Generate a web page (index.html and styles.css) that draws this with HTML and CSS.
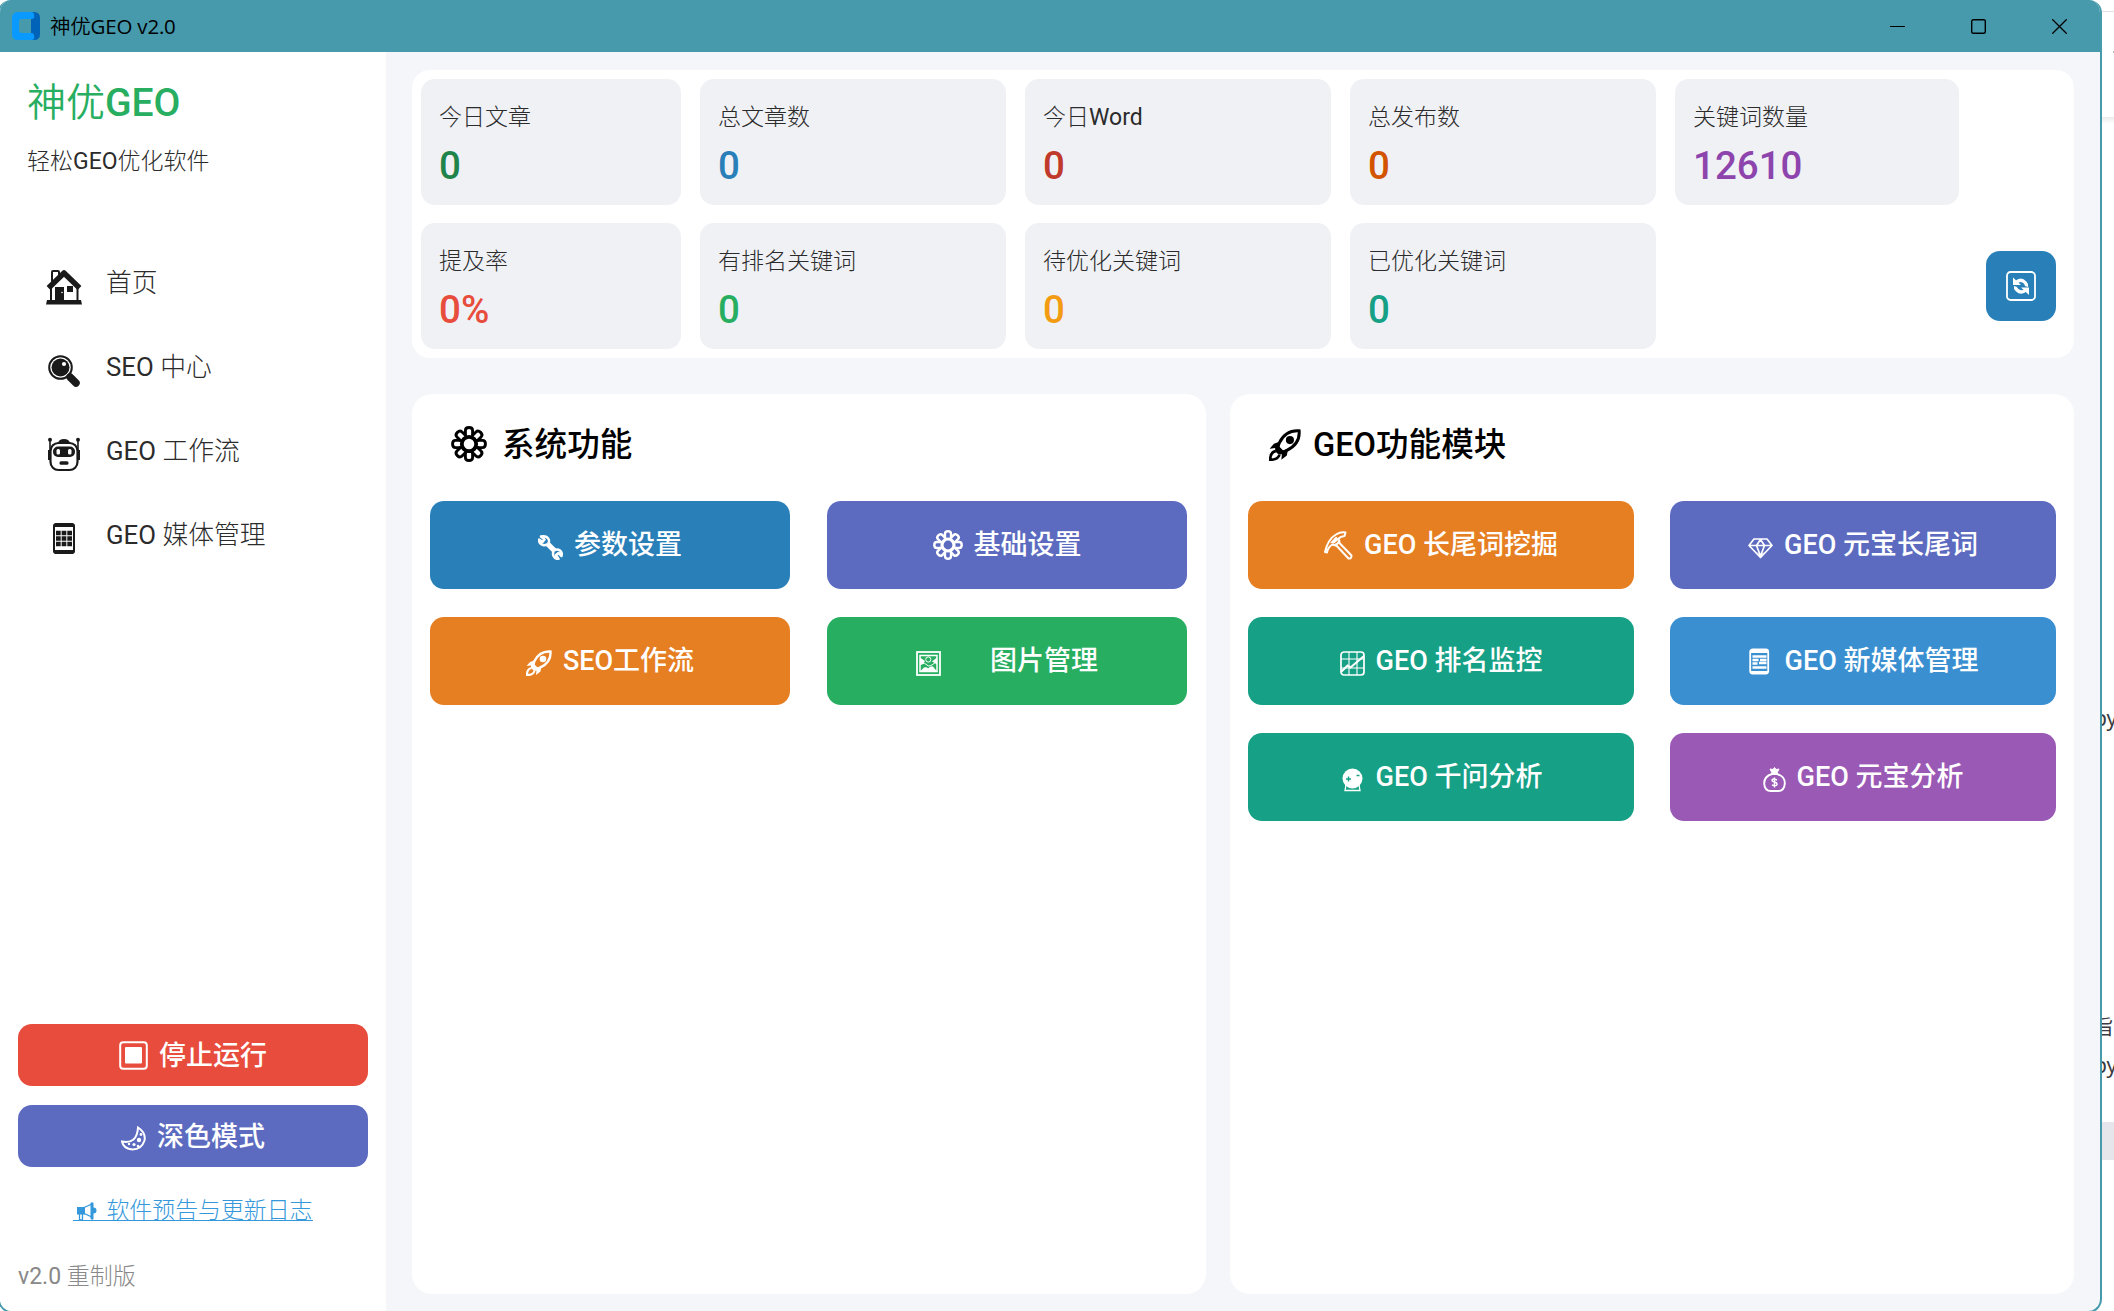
FILE: index.html
```html
<!DOCTYPE html>
<html lang="zh-CN">
<head>
    <meta charset="UTF-8">
    <meta name="viewport" content="width=device-width, initial-scale=1.0">
    <title>神优GEO v2.0</title>
    <link rel="stylesheet" href="styles.css">
</head>
<body>
    <!-- Shared icons -->
    <svg class="icon-defs" width="0" height="0">
        <symbol id="gear" viewBox="0 0 30 30">
            <g fill="none" stroke="currentColor" stroke-width="2.4">
                <g id="lobe-pair">
                    <path d="M12 8.600V3.800Q12 1.300 15 1.300T18 3.800V8.600"/>
                    <path d="M12 21.400V26.200Q12 28.700 15 28.700T18 26.200V21.400"/>
                </g>
                <use href="#lobe-pair" transform="rotate(45 15 15)"/>
                <use href="#lobe-pair" transform="rotate(90 15 15)"/>
                <use href="#lobe-pair" transform="rotate(135 15 15)"/>
                <circle cx="15" cy="15" r="6" stroke-width="3.200"/>
            </g>
        </symbol>
        <symbol id="rocket" viewBox="0 0 26 26">
            <path d="M24.500 1.500C18 1 12 4 8.500 11L7 15l4 4 3.500-1.600C21.500 14 25 8 24.500 1.500z" fill="none" stroke="currentColor" stroke-width="2.400"/>
            <circle cx="17" cy="9" r="3.300" fill="currentColor"/>
            <path d="M9.500 10L4 12l-3.500 4 4.500-.5L5 18l3 3 2.500-.5L10 25l4.500-3.500 1-5.500-4 1.500-3-3z" fill="currentColor"/>
            <path d="M5.500 18C2 18.500 1 21 1 25c4.500 0 6.500-1 7.500-4" fill="none" stroke="currentColor" stroke-width="2.200"/>
        </symbol>
    </svg>

    <!-- Strip of the page behind the window -->
    <div class="behind">
        <span class="behind-line"></span>
        <span class="behind-tick"></span>
        <span class="behind-shadow"></span>
        <span class="behind-text behind-a">py</span>
        <span class="behind-text behind-b">旨</span>
        <span class="behind-text behind-c">py</span>
        <span class="behind-bar"></span>
    </div>

    <div class="window">
        <div class="titlebar">
            <svg class="app-logo" width="28" height="28" viewBox="0 0 28 28">
                <path d="M18 0h4q6 0 6 6v16q0 6-6 6h-4l1-6V6z" fill="#0063b8"/>
                <path d="M6 0h14q3 1 2 6-1 1-3 1H10q-3 0-3 3v8q0 3 3 3h10q3 1 2 6l-2 1H6q-6 0-6-6V6q0-6 6-6z" fill="#0a9aff"/>
            </svg>
            <span class="title">神优GEO v2.0</span>
            <div class="controls">
                <svg width="15" height="15" viewBox="0 0 15 15"><path d="M0 7.500h15" stroke="#000"/></svg>
                <svg width="15" height="15" viewBox="0 0 15 15"><rect x=".7" y=".7" width="13.600" height="13.600" rx="1.500" fill="none" stroke="#000" stroke-width="1.400"/></svg>
                <svg width="15" height="15" viewBox="0 0 15 15"><path d="M.3.3l14.400 14.400M14.700.3L.3 14.700" stroke="#000" stroke-width="1.300"/></svg>
            </div>
        </div>

        <div class="body">
            <div class="sidebar">
                <div class="brand">神优GEO</div>
                <div class="slogan">轻松GEO优化软件</div>

                <div class="nav">
                    <div class="nav-item">
                        <svg width="36" height="36" viewBox="0 0 36 36">
                            <path d="M6 14V3q0-1 1-1h5q1 0 1 1v4" fill="none" stroke="#1a1a1a" stroke-width="2"/>
                            <path d="M2.500 19L18 4l15.500 15" fill="none" stroke="#1a1a1a" stroke-width="5.500" stroke-linejoin="round"/>
                            <path d="M5 18v13M31.500 18v13" stroke="#1a1a1a" stroke-width="2"/>
                            <path d="M9 18h9v13H9zM21 17h6v6h-6zM1 31h34l1 4.500H0z" fill="#1a1a1a"/>
                            <circle cx="16" cy="23.500" r=".8" fill="#fff"/>
                        </svg>
                        <span>首页</span>
                    </div>
                    <div class="nav-item">
                        <svg width="36" height="36" viewBox="0 0 36 36">
                            <circle cx="14.500" cy="14.500" r="11.300" fill="none" stroke="#1a1a1a" stroke-width="2"/>
                            <circle cx="14.500" cy="14.500" r="9" fill="#1a1a1a"/>
                            <circle cx="18" cy="11" r="2.100" fill="#fff"/>
                            <path d="M24 24l6 6" stroke="#1a1a1a" stroke-width="7.500" stroke-linecap="round"/>
                        </svg>
                        <span>SEO 中心</span>
                    </div>
                    <div class="nav-item">
                        <svg width="36" height="36" viewBox="0 0 36 36">
                            <rect x="4.500" y="6" width="27" height="27" rx="8" fill="none" stroke="#1a1a1a" stroke-width="2.200"/>
                            <path d="M12 6q1-4 6-4t6 4z" fill="#1a1a1a"/>
                            <path d="M4 3v10M32 3v10" stroke="#1a1a1a" stroke-width="1.600"/>
                            <circle cx="4" cy="2.800" r="2" fill="#1a1a1a"/><circle cx="32" cy="2.800" r="2" fill="#1a1a1a"/>
                            <path d="M3.500 13v10M32.500 13v10" stroke="#1a1a1a" stroke-width="3"/>
                            <rect x="7" y="9.500" width="22" height="10.500" rx="5" fill="#1a1a1a"/>
                            <rect x="10.500" y="12" width="3.500" height="5.500" rx="1.500" fill="#fff"/><rect x="22" y="12" width="3.500" height="5.500" rx="1.500" fill="#fff"/>
                            <rect x="13.500" y="24.300" width="9" height="3.400" rx="1.500" fill="#1a1a1a"/>
                        </svg>
                        <span>GEO 工作流</span>
                    </div>
                    <div class="nav-item">
                        <svg width="36" height="36" viewBox="0 0 36 36">
                            <rect x="8" y="3" width="20" height="29" rx="2.500" fill="none" stroke="#1a1a1a" stroke-width="2"/>
                            <path d="M7 6q0-4 4-4h14q4 0 4 4zM7 29h22q0 4-4 4H11q-4 0-4-4z" fill="#1a1a1a"/>
                            <path d="M10 12h16M10 17.500h16M10 23h16" stroke="#1a1a1a" stroke-width="4.400" stroke-dasharray="4.700 .95"/>
                        </svg>
                        <span>GEO 媒体管理</span>
                    </div>
                </div>

                <div class="side-btn red">
                    <svg width="29" height="29" viewBox="0 0 29 29">
                        <rect x="1.200" y="1.200" width="26.600" height="26.600" rx="3" fill="none" stroke="#fff" stroke-width="2"/>
                        <rect x="6" y="6" width="17" height="16.500" rx="1" fill="#fff"/>
                    </svg>
                    <span>停止运行</span>
                </div>
                <div class="side-btn indigo">
                    <svg class="low" width="25" height="25" viewBox="0 0 25 25">
                        <path d="M17 1.500q8 5 6.500 13-3 9-12 9Q2.500 23 1 15.500q15 3 16-14z" fill="none" stroke="#fff" stroke-width="2"/>
                        <circle cx="18" cy="14" r="2.200" fill="#fff"/><circle cx="13" cy="18.500" r="1.600" fill="#fff"/><circle cx="20" cy="8.500" r="1.400" fill="#fff"/><circle cx="8" cy="18" r="1.200" fill="#fff"/><circle cx="17" cy="20" r="1.300" fill="#fff"/>
                    </svg>
                    <span>深色模式</span>
                </div>
                <div class="log-link">
                    <svg width="20" height="18" viewBox="0 0 20 18">
                        <path d="M0 5h8v7.500H0zM13.500 1q2-1.500 3 0v4.500q3 0 3 3t-3 3V17q-1 1.500-3 0z" fill="#3498db"/>
                        <path d="M6 6l9-4v13l-9-4M2.500 12v6h3v-6" fill="none" stroke="#3498db" stroke-width="1.300"/>
                    </svg>
                    <span>软件预告与更新日志</span>
                </div>
                <div class="version">v2.0 重制版</div>
            </div>

            <div class="main">
                <div class="stats">
                    <div class="stat-grid">
                        <div class="stat"><span>今日文章</span><b class="c-green">0</b></div>
                        <div class="stat"><span>总文章数</span><b class="c-blue">0</b></div>
                        <div class="stat"><span>今日Word</span><b class="c-darkred">0</b></div>
                        <div class="stat"><span>总发布数</span><b class="c-pumpkin">0</b></div>
                        <div class="stat"><span>关键词数量</span><b class="c-purple">12610</b></div>
                        <div class="stat"><span>提及率</span><b class="c-red">0%</b></div>
                        <div class="stat"><span>有排名关键词</span><b class="c-lime">0</b></div>
                        <div class="stat"><span>待优化关键词</span><b class="c-orange">0</b></div>
                        <div class="stat"><span>已优化关键词</span><b class="c-teal">0</b></div>
                    </div>
                    <div class="refresh">
                        <svg width="30" height="30" viewBox="0 0 30 30">
                            <rect x="1" y="1" width="28" height="28" rx="3.500" fill="none" stroke="#fff" stroke-width="1.800"/>
                            <path d="M10 11.500q5-4.500 9 0 2 2 1.500 4M20 19q-5 4-9 0-2-2-1.500-3.500" fill="none" stroke="#fff" stroke-width="3.300"/>
                            <path d="M7 6.500v7.500h8zM23 24v-7.500h-8z" fill="#fff"/>
                        </svg>
                    </div>
                </div>

                <div class="panels">
                    <div class="panel panel-system">
                        <div class="panel-title">
                            <svg width="36" height="36"><use href="#gear"/></svg>
                            <span>系统功能</span>
                        </div>
                        <div class="btn-grid">
                            <div class="btn blue">
                                <svg class="low" width="25" height="25" viewBox="0 0 25 25">
                                    <path d="M3 1.500l3.500 3-2 2.500-3.500-2.500Q1 9 5 10q2 .5 3.500-.5l7 7q-1 2 0 4.500 1.500 3 5 3l-2.500-4 2.500-2 3 3q1-3.500-1.500-5.500-2.500-1.500-4.500-.5l-7-7q1-2 0-4Q8.500.5 3 1.500z" fill="none" stroke="#fff" stroke-width="2.500" stroke-linejoin="round"/>
                                </svg>
                                <span>参数设置</span>
                            </div>
                            <div class="btn indigo"><svg width="30" height="30"><use href="#gear"/></svg><span>基础设置</span></div>
                            <div class="btn orange"><svg class="low" width="26" height="26"><use href="#rocket"/></svg><span>SEO工作流</span></div>
                            <div class="btn green wide-gap">
                                <svg class="low" width="25" height="25" viewBox="0 0 25 25">
                                    <rect x="1" y="1" width="23" height="23" fill="none" stroke="#fff" stroke-width="1.800"/>
                                    <path d="M4 4.500h17v16H4z" fill="none" stroke="#fff" stroke-width="1.500"/>
                                    <path d="M4 6.500l5 3.500-2 3-3 1zM21 6.500l-5 4 5 3zM4 20.500l4-4q3-1 4 1 3-3 5-2l4 5z" fill="#fff"/>
                                    <circle cx="12.300" cy="8.500" r="2.600" fill="none" stroke="#fff"/>
                                    <path d="M5 13q4-2 6 1t9-3" fill="none" stroke="#fff"/>
                                </svg>
                                <span>图片管理</span>
                            </div>
                        </div>
                    </div>

                    <div class="panel panel-geo">
                        <div class="panel-title">
                            <svg class="low" width="32" height="32"><use href="#rocket"/></svg>
                            <span>GEO功能模块</span>
                        </div>
                        <div class="btn-grid">
                            <div class="btn orange">
                                <svg width="29" height="29" viewBox="0 0 29 29">
                                    <path d="M1 21Q4 8 12 3.500 17 .5 21.500 1.500l-1 3.500q-4 .5-6 2.500l1 3-4 4-3-1Q4 16 3 21.500z" fill="none" stroke="#fff" stroke-width="2" stroke-linejoin="round"/>
                                    <path d="M6 12l6-6.500 3 3-5 4z" fill="#fff"/>
                                    <path d="M11 13l13.500 14.500q3 .5 3-3L14 10.500" fill="none" stroke="#fff" stroke-width="2"/>
                                </svg>
                                <span>GEO 长尾词挖掘</span>
                            </div>
                            <div class="btn indigo">
                                <svg class="low" width="25" height="25" viewBox="0 0 25 25">
                                    <path d="M6 4h13l5 6.500-11.500 12L1 10.500zM1 10.500h23M8.500 10.500L12.500 21l4-10.500-4-6z" fill="none" stroke="#fff" stroke-width="1.700" stroke-linejoin="round"/>
                                    <path d="M9 17l3.500 5.500L16 17l-3.500 3z" fill="#fff"/>
                                </svg>
                                <span>GEO 元宝长尾词</span>
                            </div>
                            <div class="btn teal">
                                <svg class="low" width="25" height="25" viewBox="0 0 25 25">
                                    <rect x="1" y="1" width="23" height="23" rx="3" fill="none" stroke="#fff" stroke-width="1.700"/>
                                    <path d="M9 1v23M17 1v23M1 8h23M1 17h23" stroke="#fff" stroke-width="1.100"/>
                                    <path d="M1.500 20.500l6-6 3 2L24 5" fill="none" stroke="#fff" stroke-width="2.100"/>
                                </svg>
                                <span>GEO 排名监控</span>
                            </div>
                            <div class="btn sky">
                                <svg width="26" height="27" viewBox="0 0 26 27">
                                    <rect x="2.200" y="1.500" width="18" height="24" rx="2.500" fill="none" stroke="#fff" stroke-width="1.800"/>
                                    <path d="M2 5q0-4 3-4h12q3 0 3 4zM3 23h17v2.500H3z" fill="#fff"/>
                                    <path d="M4.500 8.500h14M4.500 12h6M12 12h6.500M4.500 15.500h5M11 15h7.500M4.500 19.500h14" stroke="#fff" stroke-width="2.600"/>
                                </svg>
                                <span>GEO 新媒体管理</span>
                            </div>
                            <div class="btn teal">
                                <svg class="low" width="25" height="25" viewBox="0 0 25 25">
                                    <circle cx="12.500" cy="11.500" r="10" fill="#fff"/>
                                    <path d="M6 18h13l1 5.500H5z" fill="none" stroke="#fff" stroke-width="1.300"/>
                                    <path d="M8.500 9.500v5M6 12h5M16.500 8.500h3" stroke="#16a085" stroke-width="1.400"/>
                                </svg>
                                <span>GEO 千问分析</span>
                            </div>
                            <div class="btn violet">
                                <svg class="low" width="23" height="25" viewBox="0 0 23 25">
                                    <path d="M9 7Q1 9.500 1.200 16.500q.3 7.500 6.800 7.500h7q6.500 0 6.800-7.500Q22 9.500 14 7z" fill="none" stroke="#fff" stroke-width="1.900"/>
                                    <path d="M7 2l3 .5 1.500-2 1.500 2 3-.5-2 4H9z" fill="#fff" stroke="#fff"/>
                                    <path d="M14 13q-4.500-2-5 0 0 1.500 2.500 2t2.500 2.500q-.5 2-5 .5M11.500 10.500v10" fill="none" stroke="#fff" stroke-width="1.400"/>
                                </svg>
                                <span>GEO 元宝分析</span>
                            </div>
                        </div>
                    </div>
                </div>
            </div>
        </div>
    </div>
</body>
</html>
```

FILE: styles.css
```css
* {
    box-sizing: border-box;
}
body {
    margin: 0;
    height: 1311px;
    overflow: hidden;
    background-color: #fff;
    color: #2b2b2b;
    font-family: Roboto, "Noto Sans CJK SC", sans-serif;
    white-space: nowrap;
}
svg {
    display: block;
    flex: none;
}
.icon-defs {
    position: absolute;
}
.window {
    position: relative;
    width: 2104px;
    height: 1313px;
    margin-left: -2px;
    border: 2px solid #469aac;
    border-top: none;
    border-radius: 13px 13px 14px 14px;
    overflow: hidden;
    display: flex;
    flex-direction: column;
    background-color: #f5f6fa;
}
/* Title bar */
.titlebar {
    height: 52px;
    flex: none;
    display: flex;
    align-items: center;
    padding: 0 33px 0 12px;
    background-color: #469aac;
    color: #000;
}
.title {
    margin: 0 0 2px 10px;
    font-family: "Open Sans", "Noto Sans CJK SC DemiLight", "Noto Sans CJK SC", sans-serif;
    font-size: 20.5px;
    letter-spacing: -0.2px;
}
.controls {
    display: flex;
    gap: 66px;
    margin-left: auto;
}
.body {
    flex: 1;
    display: flex;
}
/* Sidebar */
.sidebar {
    width: 386px;
    display: flex;
    flex-direction: column;
    padding: 26px 18px 18px;
    background-color: #fff;
}
.brand {
    padding-left: 9px;
    font-family: Roboto, "Noto Sans CJK SC DemiLight", "Noto Sans CJK SC", sans-serif;
    font-size: 39px;
    line-height: 50px;
    font-weight: 500;
    color: #27ae60;
}
.slogan {
    padding-left: 9px;
    margin-top: 18px;
    font-size: 23px;
    line-height: 32px;
}
.slogan, .nav-item, .stat span, .log-link, .version {
    font-family: Roboto, "Noto Sans CJK SC Light", "Noto Sans CJK SC", sans-serif;
}
.nav {
    margin-top: 63px;
    margin-bottom: auto;
}
.nav-item {
    height: 84px;
    display: flex;
    align-items: center;
    gap: 24px;
    padding-left: 28px;
    font-size: 25.8px;
}
.nav-item svg {
    margin-top: 7px;
}
.nav-item span {
    margin-bottom: 5px;
}
.side-btn {
    height: 62px;
    margin-bottom: 19px;
    border-radius: 14px;
    display: flex;
    justify-content: center;
    align-items: center;
    gap: 11px;
    font-size: 27px;
    font-weight: 500;
    color: #fff;
}
.side-btn span {
    margin-bottom: 3px;
}
.low {
    margin-top: 4px;
}
.log-link {
    align-self: center;
    height: 25px;
    margin-top: 10px;
    padding-left: 4px;
    display: flex;
    align-items: center;
    gap: 9px;
    font-size: 22.9px;
    color: #3498db;
    border-bottom: 1px solid #3498db;
}
.log-link svg {
    margin-top: 6px;
}
.version {
    margin-top: 40px;
    font-size: 23px;
    line-height: 32px;
    color: #888;
}
/* Main area */
.main {
    flex: 1;
    display: flex;
    flex-direction: column;
    padding: 18px 26px 17px;
}
.stats {
    height: 288px;
    display: flex;
    padding: 9px 18px 9px 9px;
    border-radius: 18px;
    background-color: #fff;
}
.stat-grid {
    display: grid;
    grid-template-columns: 260px 306px 306px 306px 284px;
    grid-template-rows: 126px 126px;
    gap: 18px 19px;
}
.stat {
    padding: 23px 18px 0;
    border-radius: 14px;
    background-color: #f0f1f5;
}
.stat span, .stat b {
    display: block;
}
.stat span {
    font-size: 23px;
    line-height: 32px;
}
.stat b {
    margin-top: 9px;
    font-size: 38.5px;
    line-height: 46px;
    font-weight: 500;
}
.c-green { color: #1e8449; }
.c-blue { color: #2980b9; }
.c-darkred { color: #c0392b; }
.c-pumpkin { color: #d35400; }
.c-purple { color: #8e44ad; }
.c-red { color: #e74c3c; }
.c-lime { color: #27ae60; }
.c-orange { color: #f39c12; }
.c-teal { color: #16a085; }
.refresh {
    width: 70px;
    height: 70px;
    margin-left: auto;
    margin-top: 172px;
    display: flex;
    align-items: center;
    justify-content: center;
    border-radius: 14px;
    background-color: #2980b9;
}
.panels {
    flex: 1;
    display: flex;
    gap: 24px;
    margin-top: 36px;
}
.panel {
    padding: 0 18px;
    border-radius: 20px;
    background-color: #fff;
}
.panel-system {
    width: 794px;
}
.panel-geo {
    width: 844px;
}
.panel-title {
    height: 107px;
    display: flex;
    align-items: center;
    gap: 15px;
    padding: 0 0 7px 21px;
    font-size: 32.6px;
    font-weight: 500;
    color: #000;
}
.panel-title span {
    margin-bottom: 5px;
}
.panel-geo .panel-title {
    gap: 12px;
}
.panel-geo .panel-title svg {
    margin-top: 2px;
}
.btn-grid {
    display: grid;
    grid-template-columns: 360px 360px;
    grid-auto-rows: 88px;
    gap: 28px 37px;
}
.panel-geo .btn-grid {
    grid-template-columns: 386px 386px;
    column-gap: 36px;
}
.btn {
    display: flex;
    align-items: center;
    justify-content: center;
    gap: 11px;
    border-radius: 14px;
    font-size: 27px;
    font-weight: 500;
    color: #fff;
}
.btn span {
    margin-bottom: 6px;
}
.wide-gap {
    gap: 49px;
}
.red { background-color: #e74c3c; }
.blue { background-color: #2980b9; }
.indigo { background-color: #5c6bc0; }
.orange { background-color: #e67e22; }
.green { background-color: #27ae60; }
.teal { background-color: #16a085; }
.sky { background-color: #3a8fd1; }
.violet { background-color: #9b59b6; }
/* Page visible behind the window, at the right edge */
.behind {
    position: absolute;
    top: 0;
    right: 0;
    width: 22px;
    height: 1311px;
    overflow: hidden;
}
.behind span {
    position: absolute;
}
.behind-line {
    top: 11px;
    left: 0;
    width: 22px;
    height: 1px;
    background-color: #dfe0e8;
}
.behind-tick {
    top: 51px;
    right: 0;
    width: 1px;
    height: 2px;
    background-color: #bbb;
}
.behind-shadow {
    top: 117px;
    left: 0;
    width: 22px;
    height: 7px;
    background: linear-gradient(#ececec, #fff);
}
.behind-text {
    font-family: "Noto Sans", "Noto Sans CJK SC", sans-serif;
    font-size: 21px;
    line-height: 28px;
    color: #3a3a3f;
}
.behind-a { top: 704px; left: 2px; }
.behind-b { top: 1012px; left: 1px; }
.behind-c { top: 1051px; left: 2px; }
.behind-bar {
    top: 1122px;
    left: 0;
    width: 22px;
    height: 38px;
    background-color: #e5e6eb;
}
```
